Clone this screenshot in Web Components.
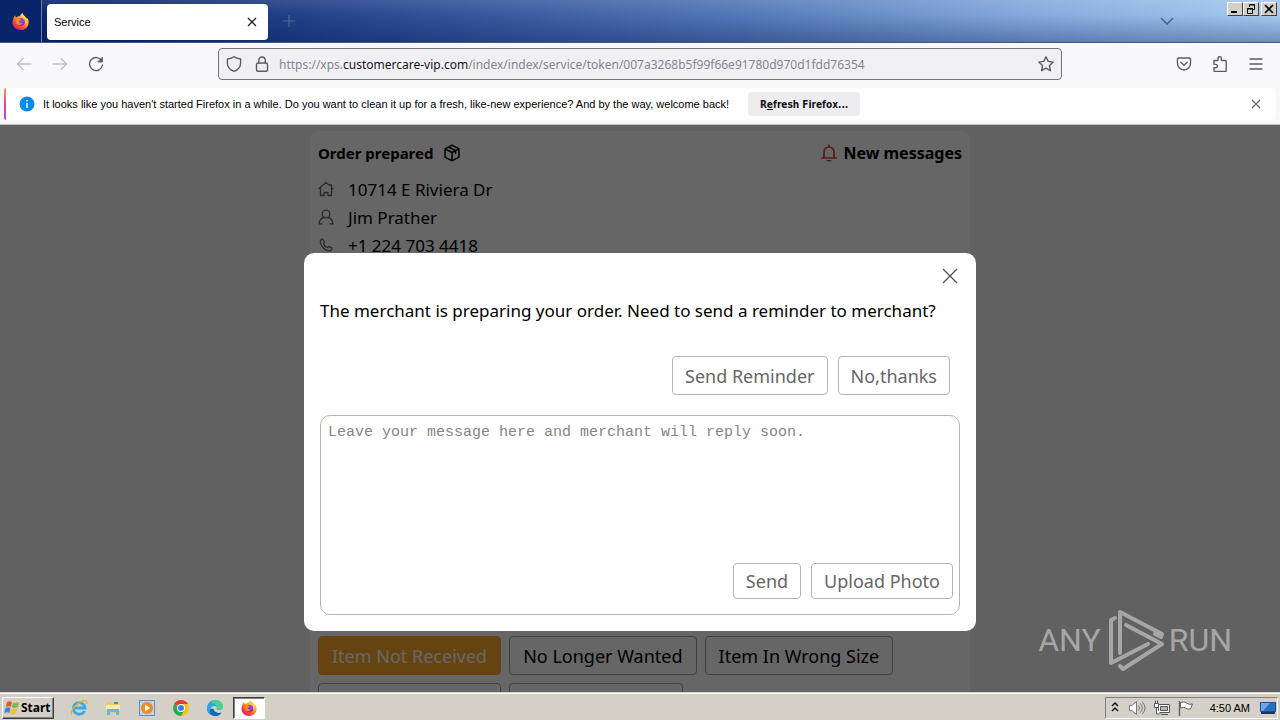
<!DOCTYPE html>
<html lang="en">
<head>
<meta charset="utf-8">
<title>Service</title>
<style>
html, body { height: 100%; margin: 0; }
body { overflow: hidden; font-family: "Noto Sans", "Open Sans", sans-serif; color: #000; }
</style>
</head>
<body>
<desktop-screen></desktop-screen>

<template id="desktop-screen">
<style>
:host { display: flex; flex-direction: column; height: 100vh; overflow: hidden; }
main { position: relative; flex: 1; min-height: 0; overflow: hidden; background: #f2f2f2; }
.backdrop { position: absolute; inset: 0; display: flex; justify-content: center; align-items: flex-start; padding-top: 128px; background: rgba(0,0,0,.6); }
run-watermark { position: absolute; right: 48px; bottom: 20px; }
</style>
<browser-tabs></browser-tabs>
<browser-toolbar></browser-toolbar>
<browser-notice></browser-notice>
<main>
<order-card></order-card>
<div class="backdrop"><reminder-dialog></reminder-dialog></div>
<run-watermark></run-watermark>
</main>
<win-taskbar></win-taskbar>
</template>

<template id="firefox-logo">
<style>:host { display: block; width: 16px; height: 16px; } svg { display: block; width: 100%; height: 100%; }</style>
<svg viewBox="0 0 32 32" aria-hidden="true">
<defs>
<linearGradient id="f" x1=".85" y1=".1" x2=".2" y2=".95"><stop offset="0" stop-color="#fff14a"/><stop offset=".35" stop-color="#ffb02e"/><stop offset=".65" stop-color="#ff5634"/><stop offset="1" stop-color="#e3146e"/></linearGradient>
<linearGradient id="g" x1=".7" y1="0" x2=".3" y2="1"><stop offset="0" stop-color="#b43cf0"/><stop offset="1" stop-color="#5a37c8"/></linearGradient>
</defs>
<path fill="url(#f)" d="M3 9c1-3 2-4 3-5 0 2 1 3 2 4 2-2 4-2 6-2 2-2 3-4 6-6 0 3 2 4 4 6 2 1 2 3 3 4l1-1c3 3 4 7 3 11-1 7-7 12-15 12S1 26 1 18c0-4 1-6 2-9z"/>
<circle cx="17" cy="17" r="7.500" fill="url(#g)"/>
<path fill="#ff8a1e" d="M6 12c3-2 6-2 8-1 1 1 2 1 3 1 0 2-2 3-4 3 0 3 3 5 7 4-2 4-8 5-11 1-2-3-1-5-3-8z"/>
<path fill="#ffd43a" d="M20 0c0 4 3 5 5 8 2 4 2 7 1 10-1-5-3-7-5-8-3-2-3-6-1-10z"/>
</svg>
</template>

<template id="browser-tabs">
<style>
:host { display: flex; height: 43px; box-sizing: border-box; border-bottom: 1px solid #43588a; font: 11px "Liberation Sans", sans-serif;
 background: linear-gradient(180deg, rgba(255,255,255,.1), rgba(255,255,255,0) 35%, rgba(0,20,80,.32)), linear-gradient(90deg, #0a246a 0, #0d2870 8%, #2c4b92 30%, #5478b8 58%, #84a9dc 80%, #a6caf0); }
button { padding: 0; border: 0; background: none; display: grid; place-items: center; }
.brand { display: grid; place-items: center; width: 41px; border-right: 1px solid #6d7fae; background: #0a246a; }
.brand firefox-logo { width: 17px; height: 17px; }
.tab { display: flex; align-items: center; justify-content: space-between; width: 221px; margin: 4px 0 2px 5px; padding: 0 9px 0 7px; box-sizing: border-box; border-radius: 4px; background: #fff; }
.plus { width: 42px; }
.list { width: 40px; margin-left: auto; }
.win { display: flex; align-items: flex-start; margin: 2px 3px 0 40px; }
.win button { width: 16px; height: 14px; box-sizing: border-box; background: #d4d0c8; border: 1px solid; border-color: #fff #404040 #404040 #fff; }
.win button:last-child { margin-left: 2px; }
</style>
<div class="brand"><firefox-logo></firefox-logo></div>
<div class="tab"><span>Service</span><button aria-label="Close tab"><svg width="14" height="14" viewBox="0 0 14 14" stroke="#222" stroke-width="1.3"><path d="M3 3l8 8M11 3l-8 8"/></svg></button></div>
<button class="plus" aria-label="New tab"><svg width="12" height="12" viewBox="0 0 12 12" stroke="#52658f" stroke-width="1.2"><path d="M6 0v12M0 6h12"/></svg></button>
<button class="list" aria-label="List all tabs"><svg width="14" height="8" viewBox="0 0 14 8" fill="none" stroke="#46628f" stroke-width="1.5"><path d="M1 1l6 6 6-6"/></svg></button>
<div class="win">
<button aria-label="Minimize"><svg width="12" height="10" viewBox="0 0 12 10"><path d="M2 7h6v2H2z"/></svg></button>
<button aria-label="Restore"><svg width="12" height="10" viewBox="0 0 12 10" fill="none" stroke="#000"><path d="M4.500 3V.5h5v5H8M4 1h6M2.500 4.500h5v5h-5zM2 5h6"/></svg></button>
<button aria-label="Close"><svg width="12" height="10" viewBox="0 0 12 10" stroke="#000" stroke-width="1.700"><path d="M2 1l8 8M10 1L2 9"/></svg></button>
</div>
</template>

<template id="browser-toolbar">
<style>
:host { display: flex; align-items: center; height: 44px; box-sizing: border-box; padding: 0 6px 2px; background: #f9f9fb; }
button { width: 36px; height: 32px; padding: 0; border: 0; background: none; display: grid; place-items: center; color: #5b5b66; }
button:disabled { color: #bfbfc6; }
svg { fill: none; stroke: currentColor; stroke-width: 1.4; stroke-linecap: round; stroke-linejoin: round; display: block; }
.url { flex: 1; display: flex; align-items: center; height: 32px; box-sizing: border-box; margin: 0 104px; padding-left: 7px; border: 1px solid #73737d; border-radius: 4px; background: #f0f0f4; color: #5b5b66; }
.url svg { flex: none; }
.url svg + svg { margin-left: 12px; }
.address { flex: 1; min-width: 0; margin-left: 9px; overflow: hidden; white-space: nowrap; font-size: 12px; color: #85858d; }
.address b { font-weight: 400; color: #15141a; }
.url button { width: 30px; height: 30px; }
</style>
<button disabled aria-label="Back"><svg width="16" height="16" viewBox="0 0 16 16"><path d="M15 8H1.500M7 2.500L1.500 8 7 13.500"/></svg></button>
<button disabled aria-label="Forward"><svg width="16" height="16" viewBox="0 0 16 16"><path d="M1 8h13.500M9 2.500L14.500 8 9 13.500"/></svg></button>
<button aria-label="Reload"><svg width="16" height="16" viewBox="0 0 16 16"><path d="M13.800 5A6.500 6.500 0 1 0 14.500 9"/><path fill="currentColor" d="M14.500 1.500V6H10z" stroke-width=".8"/></svg></button>
<div class="url">
<svg width="16" height="16" viewBox="0 0 16 16"><path d="M8 .8c2 1.700 4 2 6.600 2.200v4c0 4-3 7-6.600 8.300C4.400 14 1.400 11 1.400 7V3C4 2.800 6 2.500 8 .8z"/></svg>
<svg width="16" height="16" viewBox="0 0 16 16"><rect x="2.500" y="7" width="11" height="8.300" rx="1.500"/><path d="M4.800 7V4.200a3.200 3.200 0 0 1 6.400 0V7"/></svg>
<div class="address">https://xps.<b>customercare-vip.com</b>/index/index/service/token/007a3268b5f99f66e91780d970d1fdd76354</div>
<button aria-label="Bookmark this page"><svg width="16" height="16" viewBox="0 0 16 16"><path d="M8 .8l2.200 4.600 5 .7-3.700 3.500.9 5L8 12.200l-4.400 2.400.9-5L.8 6.100l5-.7z"/></svg></button>
</div>
<button aria-label="Save to Pocket"><svg width="16" height="16" viewBox="0 0 16 16"><path d="M2.500 2h11a1 1 0 0 1 1 1v4.500a6.500 6.500 0 0 1-13 0V3a1 1 0 0 1 1-1zM4.800 6.300L8 9.300l3.200-3"/></svg></button>
<button aria-label="Extensions"><svg width="16" height="16" viewBox="0 0 16 16"><path d="M2 4.500h4V2.500a1.700 1.700 0 0 1 3.400 0v2h3.800a1 1 0 0 1 1 1v9a1 1 0 0 1-1 1H3a1 1 0 0 1-1-1v-2.700h1.600a1.700 1.700 0 0 0 0-3.400H2z"/></svg></button>
<button aria-label="Open application menu"><svg width="14" height="12" viewBox="0 0 14 12" stroke-linecap="butt"><path d="M1 1h12M1 6h12M1 11h12"/></svg></button>
</template>

<template id="browser-notice">
<style>
:host { display: block; padding: 1px 4px 4px; border-bottom: 1px solid #c4c4c4; background: #f7f7f8; font: 11px "Liberation Sans", sans-serif; }
.bar { display: flex; align-items: center; height: 32px; border-radius: 2px 4px 4px 2px; background: linear-gradient(#ff9a52, #f0409a 50%, #9059ff) left / 2px 100% no-repeat, #fff; }
svg { flex: none; }
.info { margin: 0 8px 0 15px; }
p { margin: 0; white-space: nowrap; }
.refresh { height: 24px; width: 112px; margin-left: 19px; padding: 0; border: 0; border-radius: 4px; background: #ededf0; font: 700 10px "DejaVu Sans Condensed", "DejaVu Sans", sans-serif; color: #15141a; }
.close { margin-left: auto; width: 40px; height: 32px; padding: 0; border: 0; background: none; display: grid; place-items: center; }
</style>
<div class="bar">
<svg class="info" width="16" height="16" viewBox="0 0 16 16"><circle cx="8" cy="8" r="7.500" fill="#0a8be6"/><path d="M8 7v5M8 4v1.500" stroke="#fff" stroke-width="1.400"/></svg>
<p>It looks like you haven't started Firefox in a while. Do you want to clean it up for a fresh, like-new experience? And by the way, welcome back!</p>
<button class="refresh">R<u>e</u>fresh Firefox...</button>
<button class="close" aria-label="Close notification"><svg width="10" height="10" viewBox="0 0 10 10" stroke="#66666e" stroke-width="1.200"><path d="M1 1l8 8M9 1L1 9"/></svg></button>
</div>
</template>

<template id="outline-button">
<style>
:host { display: inline-block; }
button { width: 100%; min-width: inherit; height: var(--button-height, 39px); box-sizing: border-box; padding: 0 var(--button-padding, 12px); border: 1px solid var(--line, #b4b4b4); border-radius: 4px; background: var(--fill, transparent); color: inherit; font: 18px "Noto Sans", sans-serif; white-space: nowrap; }
</style>
<button><slot></slot></button>
</template>

<template id="contact-row">
<style>
:host { display: flex; align-items: center; gap: 14px; height: 28px; font-size: 17px; }
</style>
<slot name="icon"></slot><slot></slot>
</template>

<template id="order-card">
<style>
:host { display: block; max-width: 644px; margin: 6px auto 0; padding: 8px; border-radius: 8px; background: #fff; }
.summary { min-height: 497px; }
header { display: flex; justify-content: space-between; align-items: center; height: 28px; margin-bottom: 8px; }
h2 { display: flex; align-items: center; gap: 10px; margin: 0; font-size: 15px; font-weight: 700; }
header a { display: flex; align-items: center; gap: 6px; color: inherit; font-size: 16px; font-weight: 700; text-decoration: none; }
svg { fill: none; stroke: currentColor; stroke-linejoin: round; stroke-linecap: round; }
contact-row svg { flex: none; width: 16px; height: 16px; stroke: #666; stroke-width: 1.3; }
.bell { color: #d8452c; }
.reasons { display: flex; flex-wrap: wrap; gap: 8px; --button-padding: 13px; --line: #a0a0a0; }
.selected { --fill: #ffaa2e; --line: #ffaa2e; color: #fff; }
.wide { min-width: 183px; } .medium { min-width: 174px; }
</style>
<section class="summary">
<header>
<h2>Order prepared <svg width="18" height="18" viewBox="0 0 18 18" stroke-width="1.500"><path d="M9 1.200l7 3.600v8.400l-7 3.600-7-3.600V4.800zM2 4.800l7 3.700 7-3.700M9 8.500v8.300M5.500 3l7 3.700v2.500"/></svg></h2>
<a href="#messages"><svg class="bell" width="16" height="18" viewBox="0 0 16 18" stroke-width="1.700"><path d="M1 14h14M3 14V8a5 5 0 0 1 10 0v6M8 3V1"/><path d="M6 16.800h4" stroke="#333" stroke-width="1"/></svg>New messages</a>
</header>
<contact-row><svg slot="icon" viewBox="0 0 16 16"><path d="M1 7.500L8 1.500l3 2.500h2.500v2.500L15 8M2.500 7v7.500h3.500v-3h4v3h3.500V7"/></svg>10714 E Riviera Dr</contact-row>
<contact-row><svg slot="icon" viewBox="0 0 16 16"><circle cx="8" cy="5" r="3.800"/><path d="M1 15c.5-4 2.500-6 5-6.500M15 15c-.5-4-2.500-6-5-6.500M1 14.800h3M12 14.800h3"/></svg>Jim Prather</contact-row>
<contact-row><svg slot="icon" viewBox="0 0 16 16"><path d="M3 2.500c1-1 2-.5 2.500.5l.8 1.700c.3.700-.8 1.300-.8 2 .5 1.500 2.300 3.300 3.800 3.800.7 0 1.300-1.100 2-.8l1.900.9c1 .5 1 1.400.3 2.200C9.500 17 0 8 3 2.500z"/></svg>+1 224 703 4418</contact-row>
</section>
<section class="reasons">
<outline-button class="selected">Item Not Received</outline-button>
<outline-button>No Longer Wanted</outline-button>
<outline-button>Item In Wrong Size</outline-button>
<outline-button class="wide"></outline-button>
<outline-button class="medium"></outline-button>
</section>
</template>

<template id="reminder-dialog">
<style>
:host { display: block; width: 100%; max-width: 672px; box-sizing: border-box; padding: 0 16px 16px; border-radius: 10px; background: #fff; }
header { display: flex; justify-content: flex-end; height: 46px; }
.close { width: 40px; height: 46px; margin-right: -10px; padding: 0; border: 0; background: none; display: grid; place-items: center; }
.question { margin: 0 0 33px; font-size: 17px; line-height: 24px; }
.actions { display: flex; justify-content: flex-end; gap: 10px; margin: 0 10px 20px 0; color: #666; }
.composer { display: flex; flex-direction: column; height: 200px; box-sizing: border-box; border: 1px solid #b4b4b4; border-radius: 10px; overflow: hidden; }
textarea { flex: 1; padding: 7px; border: 0; outline: 0; resize: none; background: none; font: 15px/20px "Liberation Mono", monospace; }
textarea::placeholder { color: #858585; opacity: 1; }
.composer .actions { --button-height: 36px; margin: 0 6px 15px 0; }
</style>
<header><button class="close" aria-label="Close"><svg width="16" height="16" viewBox="0 0 16 16" stroke="#555" stroke-width="1.400"><path d="M1 1l14 14M15 1L1 15"/></svg></button></header>
<p class="question">The merchant is preparing your order. Need to send a reminder to merchant?</p>
<div class="actions"><outline-button>Send Reminder</outline-button><outline-button>No,thanks</outline-button></div>
<div class="composer">
<textarea aria-label="Message to merchant" placeholder="Leave your message here and merchant will reply soon."></textarea>
<div class="actions"><outline-button>Send</outline-button><outline-button>Upload Photo</outline-button></div>
</div>
</template>

<template id="run-watermark">
<style>
:host { display: flex; align-items: center; gap: 4px; color: #a6a6a6; font: 400 32px/64px Roboto, sans-serif; }
svg { fill: none; stroke: currentColor; stroke-width: 4; stroke-linecap: round; stroke-linejoin: round; }
</style>
<span>ANY</span>
<svg width="60" height="64" viewBox="0 0 60 64" aria-hidden="true"><path d="M15 45V4L57 26L56 29L50 26M21 17L57 36L18 61L15 58M10 10L6 12V55L43 36"/></svg>
<span>RUN</span>
</template>

<template id="win-taskbar">
<style>
:host { display: flex; align-items: center; height: 28px; box-sizing: border-box; padding: 3px 2px 1px; border-top: 1px solid #d4d0c8; box-shadow: inset 0 1px #fff; background: #d4d0c8; font: 11px "Liberation Sans", sans-serif; }
button { padding: 0; border: 0; background: none; display: grid; place-items: center; }
.start { display: flex; align-items: center; gap: 0; width: 52px; height: 22px; padding: 0 1px; box-sizing: border-box; border: 1px solid; border-color: #fff #404040 #404040 #fff; box-shadow: inset -1px -1px #808080; font: 700 12px "Noto Sans", sans-serif; }
.apps { display: flex; margin-left: 8px; }
.apps button { width: 34px; height: 22px; }
.apps .active { width: 32px; margin-left: 1px; box-sizing: border-box; border: 1px solid; border-color: #404040 #fff #fff #404040; background: #fff; box-shadow: inset 1px 1px #808080; }
svg { display: block; flex: none; }
.tray { display: flex; align-items: center; height: 20px; margin-left: auto; padding: 0 1px 0 5px; border: 1px solid; border-color: #808080 #fff #fff #808080; }
.up { margin-right: 9px; } .sound, .net { margin-right: 8px; } .flag { margin-right: 16px; }
time { margin-right: 10px; white-space: nowrap; }
</style>
<button class="start"><svg width="17" height="17" viewBox="0 0 17 17"><path fill="#e8562a" d="M3 3c2-1 3.500-1 5 0L6.800 8c-1.500-1-3-1-5 0z"/><path fill="#7ab648" d="M9 3.500c2 1 4 .8 6-.5l-1.300 5c-2 1.200-4 1.200-6 .3z"/><path fill="#3f87d9" d="M1.500 9c2-1 3.500-1 5 0L5.300 14c-1.500-1-3-1-5 0z"/><path fill="#f6bd2b" d="M7.400 9.500c2 1 4 .8 6-.3l-1.300 5c-2 1.200-4 1.200-6 .3z"/></svg>Start</button>
<div class="apps">
<button aria-label="Internet Explorer"><svg width="18" height="18" viewBox="0 0 18 18" fill="none"><path d="M14.500 11.800A5.800 5.800 0 1 1 15 9H5" stroke="#3daae8" stroke-width="2.800"/><path d="M2 16c-4-3 8-16 14-14 1.500.6 1 2 .3 3" stroke="#e7b52c" stroke-width="1.400"/></svg></button>
<button aria-label="File Explorer"><svg width="18" height="18" viewBox="0 0 18 18"><path fill="#e9c96a" d="M2 3h5l1 2h8v9H2z"/><path fill="#fbe9a7" d="M2 6h14v5H2z"/><path fill="#6bb5dc" d="M3 10h12v6h-3v-3H6v3H3z"/><path fill="#4fa04b" d="M10 3h4v2h-4z"/></svg></button>
<button aria-label="Media Player"><svg width="18" height="18" viewBox="0 0 18 18"><path fill="#b9d6ee" stroke="#5d8fbd" d="M1.500 1.500h15v15h-15z"/><circle cx="9" cy="9" r="6" fill="#f48a1d"/><path fill="#fff" d="M7 5.500l5 3.500-5 3.500z"/></svg></button>
<button aria-label="Chrome"><svg width="18" height="18" viewBox="0 0 18 18"><path fill="#e33b2e" d="M9 9L2.100 5a8 8 0 0 1 13.800 0z"/><path fill="#fbc116" d="M9 9V5h6.900A8 8 0 0 1 9 17z"/><path fill="#2da94f" d="M9 9l3.500 2L9 17A8 8 0 0 1 2.100 5z"/><circle cx="9" cy="9" r="4" fill="#fff"/><circle cx="9" cy="9" r="3" fill="#3b7ded"/></svg></button>
<button aria-label="Edge"><svg width="18" height="18" viewBox="0 0 18 18"><path fill="#1568b8" d="M1 9a8 8 0 0 0 14.800 4.200C12 15 8 13 7.500 10z"/><path fill="#2fa8dc" d="M1 9C1 4 5 1 9 1s8 3 8 6.500C17 10 15 11 13 11c-2 0-3-1-2-2 0-3-6-3-7 2-.4 2 .5 4 2 5.200C3 15 1 12 1 9z"/><path fill="#4fd08a" d="M9 1c5 0 8 3 8 6.500C17 10 15 11 13 11c-2 0-2.500-1-2-2 .500-2-2-5-6-5.500C6 2 8 1 9 1z"/></svg></button>
<button class="active" aria-label="Firefox"><firefox-logo></firefox-logo></button>
</div>
<div class="tray">
<svg class="up" width="8" height="12" viewBox="0 0 8 12" fill="none" stroke="#111" stroke-width="1.500"><path d="M1 4l3-3 3 3M1 9l3-3 3 3"/></svg>
<svg class="sound" width="18" height="16" viewBox="0 0 18 16" fill="none" stroke="#777"><path fill="#fff" d="M1.500 5.500H4L8.500 1.500v13L4 10.500H1.500z"/><path d="M10.500 5.500q2 2.500 0 5M12.500 3.500q3.500 4.500 0 9M14.500 2q5 6 0 12"/></svg>
<svg class="net" width="16" height="16" viewBox="0 0 16 16" fill="#fff" stroke="#555"><path d="M4.500 4.500h11v8h-11zM7 14.500h7"/><path fill="#b9b9b9" d="M6.500 6.500h7v4h-7z"/><path d="M.5 3.500h4v4h-4zM1.500 3V.5M3.500 3V.5M2.500 8v6h4"/></svg>
<svg class="flag" width="16" height="16" viewBox="0 0 16 16" fill="#fff" stroke="#666"><path d="M2.500 2.500q4-1.500 6 .5t6 1l-2 5q-3 .5-5-1t-5 0z"/><path d="M1.500 1v15" stroke-width="1.500"/></svg>
<time>4:50 AM</time>
<button aria-label="Show desktop"><svg width="16" height="14" viewBox="0 0 16 14"><path fill="#2b6fc4" stroke="#1c4d92" d="M.5 1.500h15v9H.5z"/><path fill="#69a7e6" d="M1 2h9L3 10H1z"/><path fill="#1d3557" d="M1 11h14v2H1z"/></svg></button>
</div>
</template>

<script>
for (const name of ["firefox-logo", "browser-tabs", "browser-toolbar", "browser-notice", "outline-button", "contact-row", "order-card", "reminder-dialog", "run-watermark", "win-taskbar", "desktop-screen"]) {
  const template = document.getElementById(name);
  customElements.define(name, class extends HTMLElement {
    constructor() {
      super();
      this.attachShadow({ mode: "open" }).append(template.content.cloneNode(true));
    }
  });
}
</script>
</body>
</html>
